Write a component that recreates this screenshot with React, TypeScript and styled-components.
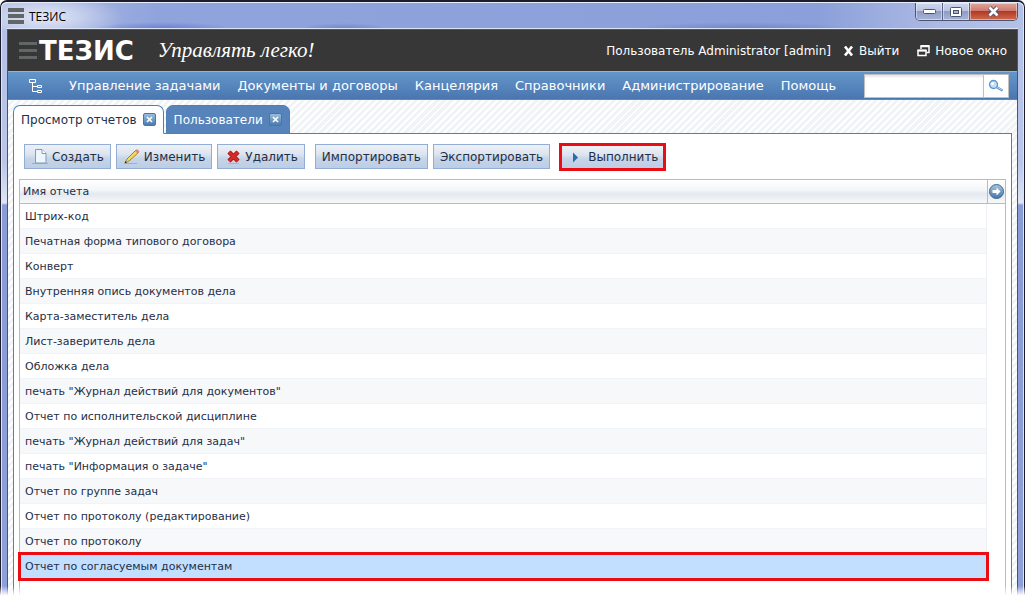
import React from 'react';
import styled, { createGlobalStyle, css } from 'styled-components';

const Global = createGlobalStyle`
  * { box-sizing: border-box; }
  html, body, #root { height: 100%; }
  body {
    margin: 0;
    overflow: hidden;
    background: #fff;
    color: #1f2f47;
    font-family: Verdana, "DejaVu Sans", sans-serif;
    font-size: 12px;
  }
  button, input { font: inherit; color: inherit; }
  svg { display: block; flex: none; }
`;

const Window = styled.div`
  position: relative;
  display: flex;
  flex-direction: column;
  height: 100%;
  border: 1px solid #1b1c2c;
  border-top-width: 2px;
  border-bottom: 0;
  border-radius: 7px 7px 0 0;
  padding: 0 6px;
  background: linear-gradient(#b4c1e6 0, #b9c6ea 160px, #dfe5f6 201px, #8a9cd6 203px, #8fa0d8 100%);
  box-shadow: inset 0 1px 0 #e8edfa, inset 1px 0 0 #dde4f7, inset -1px 0 0 #dde4f7;
  &::after {
    content: "";
    position: absolute;
    left: -1px;
    right: -1px;
    bottom: 0;
    height: 12px;
    background: linear-gradient(#fff0, #fff 80%);
  }
`;

const TitleBar = styled.header`
  display: flex;
  align-items: center;
  gap: 5px;
  height: 27px;
  flex: none;
  margin: 0 -5px;
  padding: 0 5px 0 6px;
  border-radius: 6px 6px 0 0;
  border-top: 1px solid #e8edfa;
  background:
    radial-gradient(ellipse 75px 24px at 46px 14px, #ffffffb0, #fff0),
    radial-gradient(ellipse 70px 7px at 160px 26px, #4c66c8a0, #4c66c800),
    radial-gradient(ellipse 45px 6px at 342px 26px, #5c74b4a0, #5c74b400),
    radial-gradient(ellipse 110px 7px at 740px 26px, #5c74b4a0, #5c74b400),
    linear-gradient(90deg, #b2bfe6 0, #8fa3dc 160px, #8ba0da 80%, #adbae4 92%, #b4c1e6);
  font-family: "Open Sans", "Noto Sans", sans-serif;
  color: #000;
`;

const Title = styled.span`flex: 1;`;

const WinControls = styled.div`
  display: flex;
  align-self: flex-start;
  height: 18px;
  border: 1px solid #4c5470;
  border-top: 0;
  border-radius: 0 0 5px 5px;
  overflow: hidden;
`;

const WinButton = styled.button<{ $close?: boolean }>`
  display: grid;
  place-items: center;
  width: ${p => (p.$close ? 47 : 27)}px;
  padding: 0;
  border: 0;
  border-right: ${p => (p.$close ? '0' : '1px solid #5b6484')};
  box-shadow: inset 0 0 0 1px #ffffff70;
  background: ${p => p.$close
    ? 'linear-gradient(#e0a79d 0, #cf7a6c 45%, #b23a25 50%, #cf6a4e 100%)'
    : 'linear-gradient(#cfd6ec 0, #b9c3e2 45%, #8f9dc6 50%, #a8b5da 100%)'};
`;

const Client = styled.div`
  flex: 1;
  min-height: 0;
  display: flex;
  flex-direction: column;
  border: 1px solid #4a5470;
  border-bottom: 0;
  box-shadow: 0 -1px 0 #dde4f7;
  background: repeating-linear-gradient(135deg, #fff 0 2px, #f1f4f7 2px 5px);
`;

const Banner = styled.div`
  display: flex;
  align-items: center;
  height: 41px;
  flex: none;
  padding: 0 10px 0 11px;
  background: #373737;
  color: #fff;
  white-space: nowrap;
`;

const Logo = styled.div`
  display: flex;
  align-items: center;
  gap: 2px;
  font-size: 26px;
  line-height: 26px;
  font-weight: bold;
`;

const Slogan = styled.div`
  flex: 1;
  padding-left: 24px;
  font-family: "Liberation Serif", serif;
  font-style: italic;
  font-size: 21px;
`;

const BannerText = styled.span`margin-right: 12px;`;

const BannerLink = styled.a`
  display: flex;
  align-items: center;
  gap: 5px;
  margin-right: 18px;
  color: #fff;
  text-decoration: none;
  &:last-child { margin-right: 0; }
`;

const MenuBar = styled.nav`
  display: flex;
  align-items: center;
  height: 29px;
  flex: none;
  padding: 0 8px 0 21px;
  border-top: 1px solid #9ab0d8;
  border-bottom: 1px solid #7a8494;
  background: linear-gradient(#6496ca, #4a76b0);
  color: #fff;
`;

const MenuItems = styled.div`
  display: flex;
  flex: 1;
  gap: 17px;
  padding-left: 26px;
  font-size: 13px;
  white-space: nowrap;
`;

const MenuItem = styled.a`
  color: #fff;
  text-decoration: none;
`;

const Search = styled.form`
  display: flex;
  width: 145px;
  height: 24px;
  border: 1px solid #c0c0c0;
  background: #fff;
`;

const SearchInput = styled.input`
  flex: 1;
  min-width: 0;
  border: 0;
  padding: 0 4px;
  color: #1f2f47;
  box-shadow: inset 0 2px 2px #e8e8e8;
`;

const SearchButton = styled.button`
  display: grid;
  place-items: center;
  width: 25px;
  padding: 0;
  border: 0;
  border-left: 1px solid #c0c0c0;
  background: #fff;
`;

const Tabs = styled.div`
  display: flex;
  flex: none;
  gap: 2px;
  margin: 5px 5px -1px;
`;

const Tab = styled.div<{ $active?: boolean }>`
  display: flex;
  align-items: center;
  gap: 6px;
  height: 29px;
  padding: 0 7px;
  border: 1px solid #4f7fb8;
  border-radius: 7px 7px 0 0;
  color: #fff;
  background: #5583ba;
  ${p => p.$active && css`
    color: #1f2f47;
    background: #fff;
    border-bottom-color: #fff;
    position: relative;
  `}
`;

const TabLabel = styled.button`
  padding: 0;
  border: 0;
  background: none;
`;

const TabClose = styled.button`
  display: grid;
  place-items: center;
  width: 13px;
  height: 13px;
  padding: 0;
  border: 1px solid #4677a8;
  border-radius: 2px;
  background: linear-gradient(#9bbddb, #4a7cae);
`;

const Panel = styled.main`
  flex: 1;
  min-height: 0;
  margin: 0 5px;
  padding: 9px 5px 0;
  border: 1px solid #4f7fb8;
  border-bottom: 0;
  background: #fff;
`;

const Toolbar = styled.div`
  display: flex;
  align-items: flex-start;
  height: 28px;
  gap: 5px;
  padding-left: 5px;
  margin-bottom: 8px;
`;

const ToolGroup = styled.div`
  display: flex;
  gap: 5px;
  margin-right: 5px;
`;

const ToolButton = styled.button<{ $marked?: boolean }>`
  display: flex;
  align-items: center;
  gap: 3px;
  height: 25px;
  margin: 1px 0;
  padding: 0 6px;
  border: 1px solid #92aed4;
  background: linear-gradient(#eef2f7 0, #dce4ef 40%, #c6d4e8 60%, #bccde5 100%);
  white-space: nowrap;
  ${p => p.$marked && css`
    height: 28px;
    padding: 0 5px;
    border: 3px solid #ec0c14;
    margin: 0 0 0 -1px;
  `}
`;

const Table = styled.table`
  width: 100%;
  height: 440px;
  border: 1px solid #a5c1da;
  border-spacing: 0;
  table-layout: fixed;
  font-size: 11px;
`;

const HeadCell = styled.th<{ $tool?: boolean }>`
  width: ${p => (p.$tool ? '18px' : 'auto')};
  height: 24px;
  padding: 0 0 0 ${p => (p.$tool ? 0 : 3)}px;
  border-bottom: 1px solid #a5c1da;
  border-left: ${p => (p.$tool ? '1px solid #a5c1da' : '0')};
  text-align: left;
  font-weight: normal;
  background: linear-gradient(#fff 0, #f3f5f7 45%, #e4e9ee 60%, #f7f8fa 100%);
`;

const ColumnButton = styled.button`
  display: block;
  padding: 0;
  border: 0;
  background: none;
`;

const Cell = styled.td`
  height: 25px;
  padding: 0 0 0 5px;
  border-right: 1px solid #edf0f6;
  border-bottom: 1px solid #f0f3f7;
`;

const Row = styled.tr<{ $selected?: boolean }>`
  &:nth-child(even) ${Cell} { background: #f6f8fa; }
  ${p => p.$selected && css`
    && ${Cell} {
      background: #c3dfff;
      outline: 3px solid #ec0c14;
      outline-offset: -1px;
    }
  `}
`;

const Stripes = ({ w, h, t }: { w: number; h: number; t: number }) => (
  <svg width={w} height={h} aria-hidden="true">
    {[0, 1, 2].map(i => <rect key={i} y={i * (h - t) / 2} width={w} height={t} fill="#626666" />)}
  </svg>
);

const menu = ['Управление задачами', 'Документы и договоры', 'Канцелярия', 'Справочники', 'Администрирование', 'Помощь'];

const reports = [
  'Штрих-код',
  'Печатная форма типового договора',
  'Конверт',
  'Внутренняя опись документов дела',
  'Карта-заместитель дела',
  'Лист-заверитель дела',
  'Обложка дела',
  'печать "Журнал действий для документов"',
  'Отчет по исполнительской дисциплине',
  'печать "Журнал действий для задач"',
  'печать "Информация о задаче"',
  'Отчет по группе задач',
  'Отчет по протоколу (редактирование)',
  'Отчет по протоколу',
  'Отчет по согласуемым документам',
];

const CloseMark = () => (
  <svg width="7" height="7" viewBox="0 0 7 7"><path d="M1 1l5 5M6 1l-5 5" stroke="#fff" strokeWidth="1.6" /></svg>
);

export default function App() {
  return (
    <Window>
      <Global />
      <TitleBar>
        <Stripes w={16} h={16} t={4} />
        <Title>ТЕЗИС</Title>
        <WinControls>
          <WinButton aria-label="Свернуть">
            <svg width="13" height="6"><rect x=".5" y=".5" width="12" height="4" rx="1" fill="#fff" stroke="#4c5470" /></svg>
          </WinButton>
          <WinButton aria-label="Развернуть">
            <svg width="12" height="10"><rect x=".5" y=".5" width="11" height="9" rx="1" fill="#fff" stroke="#4c5470" /><rect x="3.5" y="3.5" width="5" height="3" fill="#a8b5da" stroke="#4c5470" /></svg>
          </WinButton>
          <WinButton $close aria-label="Закрыть">
            <svg width="13" height="11" viewBox="0 0 13 11"><path d="M2.500 1.500l8 8M10.500 1.500l-8 8" stroke="#4c5470" strokeWidth="4.400" /><path d="M2.500 1.500l8 8M10.500 1.500l-8 8" stroke="#fff" strokeWidth="2.600" /></svg>
          </WinButton>
        </WinControls>
      </TitleBar>
      <Client>
        <Banner>
          <Logo><Stripes w={18} h={17} t={3} />ТЕЗИС</Logo>
          <Slogan>Управлять легко!</Slogan>
          <BannerText>Пользователь Administrator [admin]</BannerText>
          <BannerLink href="#logout">
            <svg width="11" height="10" viewBox="0 0 11 10"><path d="M2 0.500l7 9M9 0.500l-7 9" stroke="#fff" strokeWidth="2.600" /></svg>
            Выйти
          </BannerLink>
          <BannerLink href="#new">
            <svg width="13" height="12" viewBox="0 0 13 12" fill="none" stroke="#fff"><path d="M4 4V1.500h8V7.500H9.500M3.500 1.500h9" strokeWidth="1.500" /><path d="M3.500 1h9M0.500 5.500h9" strokeWidth="2" /><path d="M1 5.500h8v5H1z" strokeWidth="1.500" /></svg>
            Новое окно
          </BannerLink>
        </Banner>
        <MenuBar>
          <svg width="14" height="16" viewBox="0 0 14 16" fill="none" stroke="#fff"><path d="M.5 1.500h6v3h-6zM8.500 7.500h4v2h-4zM8.500 12.500h4v2h-4zM3.500 5v8.500H8M3.500 8.500H8" /></svg>
          <MenuItems>{menu.map(m => <MenuItem key={m} href="#menu">{m}</MenuItem>)}</MenuItems>
          <Search>
            <SearchInput aria-label="Поиск" />
            <SearchButton type="button" aria-label="Найти">
              <svg width="16" height="14" viewBox="0 0 16 14"><path d="M8.500 8l6 3.500" stroke="#5f8fc4" strokeWidth="2.400" /><path d="M9 8l5 3" stroke="#b9d7f2" /><circle cx="5.500" cy="5.500" r="4" fill="#bfe0fa" stroke="#5d96cd" strokeWidth="1.300" /><circle cx="4.500" cy="4.500" r="1.500" fill="#fff" /></svg>
            </SearchButton>
          </Search>
        </MenuBar>
        <Tabs>
          <Tab $active><TabLabel>Просмотр отчетов</TabLabel><TabClose aria-label="Закрыть вкладку"><CloseMark /></TabClose></Tab>
          <Tab><TabLabel>Пользователи</TabLabel><TabClose aria-label="Закрыть вкладку"><CloseMark /></TabClose></Tab>
        </Tabs>
        <Panel>
          <Toolbar>
            <ToolGroup>
              <ToolButton>
                <svg width="18" height="17" viewBox="0 0 18 17"><path d="M1 15.500h16" stroke="#9fb0c6" /><path d="M4.500 1.500h6.500l4 4v9.500h-10.500z" fill="#eef6fd" stroke="#7f9cba" /><path d="M11 1.500v4h4" fill="#fff" stroke="#7f9cba" /></svg>
                Создать
              </ToolButton>
              <ToolButton>
                <svg width="18" height="17" viewBox="0 0 18 17"><path d="M2 15.500h12" stroke="#9fb0c6" /><path d="M2 15l2-4L13 2l2.500 2.500L6 13z" fill="#f3dc5c" stroke="#94853a" /><path d="M12 3l2-2 2.500 2.500-2 2z" fill="#e8837c" /><path d="M1.500 15.500l1-2.500 1.500 1.500z" fill="#333" /></svg>
                Изменить
              </ToolButton>
              <ToolButton>
                <svg width="18" height="17" viewBox="0 0 18 17"><path d="M4 15.500h11" stroke="#aab6c6" /><path d="M5 4l9 9M14 4l-9 9" stroke="#a30f10" strokeWidth="4.500" /><path d="M5 4l9 9M14 4l-9 9" stroke="#d92b25" strokeWidth="2.800" /></svg>
                Удалить
              </ToolButton>
            </ToolGroup>
            <ToolGroup>
              <ToolButton>Импортировать</ToolButton>
              <ToolButton>Экспортировать</ToolButton>
            </ToolGroup>
            <ToolButton $marked>
              <svg width="18" height="17" viewBox="0 0 18 17"><path d="M6 3.500l5 5-5 5z" fill="#2f6ca5" /></svg>
              Выполнить
            </ToolButton>
          </Toolbar>
          <Table>
            <thead>
              <tr>
                <HeadCell>Имя отчета</HeadCell>
                <HeadCell $tool>
                  <ColumnButton aria-label="Столбцы">
                    <svg width="17" height="17" viewBox="0 0 17 17"><defs><linearGradient id="g" x2="0" y2="1"><stop stopColor="#a9c6df" /><stop offset="1" stopColor="#3f76a9" /></linearGradient></defs><circle cx="8.500" cy="8.500" r="7" fill="url(#g)" stroke="#46698c" /><path d="M4.500 7h4V4.500l4 4-4 4V10h-4z" fill="#fff" /></svg>
                  </ColumnButton>
                </HeadCell>
              </tr>
            </thead>
            <tbody>
              {reports.map((r, i) => <Row key={r} $selected={i === reports.length - 1}><Cell>{r}</Cell></Row>)}
              <tr><td /></tr>
            </tbody>
          </Table>
        </Panel>
      </Client>
    </Window>
  );
}
